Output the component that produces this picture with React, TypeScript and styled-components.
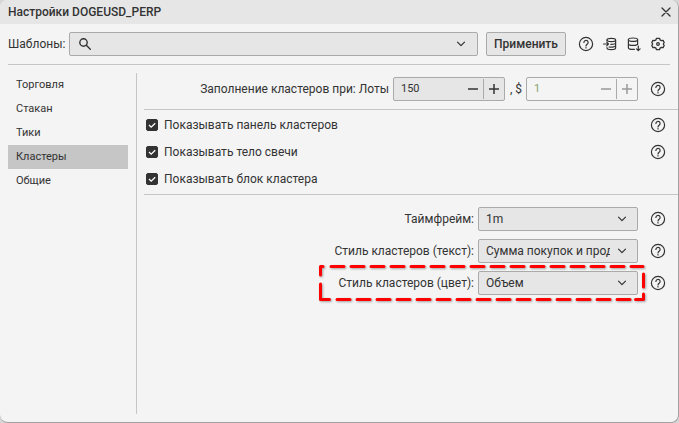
import React, { useState } from 'react';
import styled, { createGlobalStyle, css } from 'styled-components';

const GlobalStyle = createGlobalStyle`
  *, *::before, *::after { box-sizing: border-box; }
  body {
    margin: 0;
    background: #d6d6d6;
    color: #333;
    font: 12px/20px Roboto, "Noto Sans", sans-serif;
  }
  button, input, select { font: inherit; color: inherit; margin: 0; }
`;

const Dialog = styled.main`
  position: relative;
  display: flex;
  flex-direction: column;
  min-height: 100vh;
  background: #f4f4f4;
  border: solid #a2a2a2;
  border-width: 0 1px 1px 0;
  border-radius: 8px;
  overflow: hidden;
`;

const TitleBar = styled.header`
  display: flex;
  align-items: center;
  justify-content: space-between;
  height: 24px;
  padding: 0 4px 0 8px;
  background: #e6e6e6;
`;

const Title = styled.h1`
  margin: 0;
  font-size: 12px;
  font-weight: 500;
  line-height: 24px;
`;

const IconButton = styled.button`
  display: flex;
  align-items: center;
  justify-content: center;
  flex: none;
  width: 16px;
  height: 16px;
  padding: 0;
  border: 0;
  background: none;
  color: #333;
`;

const Toolbar = styled.div`
  display: flex;
  align-items: center;
  height: 41px;
  margin: 0 8px;
  border-bottom: 1px solid #c6c6c6;
`;

const frame = css`
  height: 24px;
  border: 1px solid #aaa;
  border-radius: 2px;
  background: #e6e6e6;
`;

const ToolbarLabel = styled.label`
  width: 61px;
  flex: none;
  white-space: nowrap;
`;

const SearchBox = styled.div`
  ${frame}
  display: flex;
  align-items: center;
  flex: 1;
  min-width: 0;
  padding: 0 8px;
  gap: 6px;
`;

const SearchInput = styled.input`
  flex: 1;
  min-width: 0;
  border: 0;
  padding: 0;
  background: none;
  outline: 0;
`;

const ApplyButton = styled.button`
  ${frame}
  width: 80px;
  margin: 0 12px 0 8px;
  padding: 0;
  font-weight: 500;
`;

const ToolIcons = styled.div`
  display: flex;
  gap: 8px;
  padding-right: 4px;
`;

const Body = styled.div`
  display: flex;
  flex: 1;
  padding: 8px 0 8px 8px;
`;

const Sidebar = styled.nav`
  width: 129px;
  flex: none;
  padding-right: 8px;
  border-right: 1px solid #c6c6c6;
`;

const NavItem = styled.a<{ $active: boolean }>`
  display: block;
  height: 24px;
  padding-left: 8px;
  font-size: 11px;
  line-height: 24px;
  color: inherit;
  text-decoration: none;
  background: ${(p) => (p.$active ? '#c6c6c6' : 'transparent')};
`;

const Content = styled.div`
  flex: 1;
  min-width: 0;
  margin-left: 7px;
`;

const Section = styled.section`
  display: flex;
  flex-direction: column;
`;

const FillSection = styled(Section)`
  padding: 4px 0 8px;
`;

const CheckSection = styled(Section)`
  padding: 1px 0 2px;
  border: solid #c6c6c6;
  border-width: 1px 0;
`;

const SelectSection = styled(Section)`
  padding-top: 12px;
  gap: 8px;
`;

const Row = styled.div`
  display: flex;
  align-items: center;
  justify-content: flex-end;
  min-height: 24px;
  padding-right: 12px;
  white-space: nowrap;
`;

const HelpSlot = styled.span`
  display: flex;
  margin-left: 12px;
`;

const FieldLabel = styled.label`
  margin-right: 4px;
`;

const Separator = styled.label`
  width: 21px;
  padding-left: 5px;
`;

const NumberBox = styled.div<{ $disabled?: boolean }>`
  ${frame}
  display: flex;
  align-items: center;
  width: 112px;
  padding-left: 7px;
  color: #333;
  ${(p) => p.$disabled && css`
    background: #f4f4f4;
    color: #999;
  `}
`;

const NumberInput = styled.input`
  flex: 1;
  min-width: 0;
  padding: 0;
  border: 0;
  outline: 0;
  background: none;
  font-size: 11px;
  &:disabled { color: #89a06e; }
`;

const StepButton = styled.button<{ $divided?: boolean }>`
  display: flex;
  align-items: center;
  justify-content: center;
  flex: none;
  width: 21px;
  height: 20px;
  padding: 0;
  border: 0;
  border-left: ${(p) => (p.$divided ? '1px solid #aaa' : '0')};
  background: none;
`;

const CheckRow = styled(Row)`
  justify-content: space-between;
  height: 27px;
  padding-left: 2px;
`;

const CheckLabel = styled.label`
  display: flex;
  align-items: center;
  gap: 6px;
`;

const CheckMark = styled.span`
  display: grid;
  width: 12px;
  height: 12px;
  & > * { grid-area: 1 / 1; }
  svg { pointer-events: none; }
`;

const CheckInput = styled.input`
  appearance: none;
  width: 12px;
  height: 12px;
  border: 1px solid #333;
  border-radius: 2px;
  &:checked { background: #333; }
  &:not(:checked) + svg { display: none; }
`;

const SelectWrap = styled.div`
  display: grid;
  align-items: center;
  width: 160px;
  & > * { grid-area: 1 / 1; }
  svg { justify-self: end; margin-right: 11px; pointer-events: none; }
`;

const Select = styled.select`
  ${frame}
  appearance: none;
  width: 100%;
  padding: 0 27px 0 7px;
  outline: 0;
`;

const FieldGroup = styled.div`
  position: relative;
  display: flex;
  align-items: center;
`;

const Outline = styled.svg`
  position: absolute;
  right: -8px;
  top: -7px;
  pointer-events: none;
  filter: drop-shadow(1px 1px 1px #0005);
`;

const EdgeStrip = styled.span`
  position: absolute;
  right: -1px;
  top: 266px;
  width: 1px;
  height: 24px;
  background: #43a047;
`;

const stroke = {
  fill: 'none',
  stroke: 'currentColor',
  strokeLinecap: 'round' as const,
  strokeLinejoin: 'round' as const,
};

const HelpIcon = () => (
  <svg width="16" height="16" viewBox="0 0 16 16" {...stroke} strokeWidth="1.2" aria-hidden>
    <circle cx="8" cy="8" r="6.6" />
    <path d="M5.9 6.4a2.1 2.1 0 1 1 3.4 1.7C8.5 8.7 8 9 8 9.9" />
    <path d="M8 11.7v.2" strokeWidth="1.3" />
  </svg>
);

const ImportIcon = () => (
  <svg width="16" height="16" viewBox="0 0 16 16" {...stroke} strokeWidth="1.2" aria-hidden>
    <path d="M5 4.500V4c0-1 1.800-1.600 4.300-1.600S13.600 3 13.600 4v8c0 1-1.800 1.600-4.300 1.600S5 13 5 12v-.500" />
    <path d="M5 4c0 1 1.800 1.600 4.300 1.600S13.600 5 13.600 4M8.800 8.300c2.800.1 4.800-.4 4.800-1.400M7 11c3.600.5 6.600-.2 6.600-1.400" />
    <path d="M1.500 8h5M4.700 6.200 6.500 8 4.700 9.800" />
  </svg>
);

const ExportIcon = () => (
  <svg width="16" height="16" viewBox="0 0 16 16" {...stroke} strokeWidth="1.2" aria-hidden>
    <ellipse cx="7" cy="3.700" rx="4.600" ry="1.700" />
    <path d="M2.400 3.700v8c0 1 2 1.700 4.600 1.700h1.400M11.600 3.700v5M2.400 7.700c0 1 2 1.700 4.600 1.700s4.600-.7 4.600-1.700" />
    <path d="M12.300 10v4.500M10.500 12.900l1.800 1.800 1.800-1.800" />
  </svg>
);

const GearIcon = () => (
  <svg width="16" height="16" viewBox="0 0 16 16" {...stroke} strokeWidth="1.300" aria-hidden>
    <path d="M6.500 2.300h3l.6 1.600 1.300.7 1.700-.2 1.100 2.100L13.300 8l.9 1.500-1.100 2.100-1.700-.2-1.300.7-.6 1.600h-3l-.6-1.600-1.300-.7-1.700.2-1.100-2.100.9-1.500-.9-1.500 1.100-2.100 1.700.2 1.300-.7z" />
    <circle cx="8" cy="8" r="1.300" />
  </svg>
);

const ChevronIcon = () => (
  <svg width="10" height="10" viewBox="0 0 10 10" {...stroke} strokeWidth="1.200" aria-hidden>
    <path d="M1.500 3.200 5 6.700l3.500-3.500" />
  </svg>
);

const SearchIcon = () => (
  <svg width="14" height="14" viewBox="0 0 14 14" {...stroke} strokeWidth="1.400" aria-hidden>
    <circle cx="5.500" cy="5.500" r="3.700" />
    <path d="m8.300 8.300 4 4" />
  </svg>
);

const CloseIcon = () => (
  <svg width="10" height="10" viewBox="0 0 10 10" {...stroke} strokeWidth="1.300" aria-hidden>
    <path d="m1 1 8 8M9 1 1 9" />
  </svg>
);

const StepIcon = ({ plus }: { plus?: boolean }) => (
  <svg width="10" height="10" viewBox="0 0 10 10" fill="none" stroke="currentColor" strokeWidth="1.500" aria-hidden>
    <path d={plus ? 'M0 5h10M5 0v10' : 'M0 5h10'} />
  </svg>
);

const Help = () => (
  <HelpSlot>
    <IconButton aria-label="Справка"><HelpIcon /></IconButton>
  </HelpSlot>
);

interface StepperProps {
  id: string;
  value: string;
  disabled?: boolean;
}

const Stepper = ({ id, value, disabled }: StepperProps) => {
  const [current, setCurrent] = useState(value);
  const step = (by: number) => setCurrent(String(Number(current) + by));
  return (
    <NumberBox $disabled={disabled}>
      <NumberInput id={id} value={current} disabled={disabled} onChange={(e) => setCurrent(e.target.value)} />
      <StepButton disabled={disabled} aria-label="Уменьшить" onClick={() => step(-1)}><StepIcon /></StepButton>
      <StepButton $divided disabled={disabled} aria-label="Увеличить" onClick={() => step(1)}><StepIcon plus /></StepButton>
    </NumberBox>
  );
};

const Check = ({ label, help }: { label: string; help?: boolean }) => (
  <CheckRow>
    <CheckLabel>
      <CheckMark>
        <CheckInput type="checkbox" defaultChecked />
        <svg width="12" height="12" viewBox="0 0 12 12" fill="none" stroke="#fff" strokeWidth="1.300" aria-hidden>
          <path d="m3 6 2.200 2.200L9.200 4.200" />
        </svg>
      </CheckMark>
      {label}
    </CheckLabel>
    {help && <Help />}
  </CheckRow>
);

const Highlight = () => (
  <Outline width="330" height="40" viewBox="0 0 330 40" fill="none" stroke="#f00" strokeWidth="3" strokeLinecap="round" strokeLinejoin="round" aria-hidden>
    <path d="M7 2.500H4.500V11M4.500 20v15.500h9" />
    <path d="M15 2.500H312" strokeDasharray="13 7" />
    <path d="M21 35.500H314" strokeDasharray="13 7" />
    <path d="M315 2.500h12M327.500 10v13M327.500 30v5.500h-8" />
  </Outline>
);

interface SelectFieldProps {
  id: string;
  label: string;
  value: string;
  highlighted?: boolean;
}

const SelectField = ({ id, label, value, highlighted }: SelectFieldProps) => (
  <Row>
    <FieldGroup>
      <FieldLabel htmlFor={id}>{label}</FieldLabel>
      <SelectWrap>
        <Select id={id}><option>{value}</option></Select>
        <ChevronIcon />
      </SelectWrap>
      {highlighted && <Highlight />}
    </FieldGroup>
    <Help />
  </Row>
);

const pages = ['Торговля', 'Стакан', 'Тики', 'Кластеры', 'Общие'];

export default function App() {
  const [page, setPage] = useState('Кластеры');
  return (
    <>
      <GlobalStyle />
      <Dialog>
        <TitleBar>
          <Title>Настройки DOGEUSD_PERP</Title>
          <IconButton aria-label="Закрыть"><CloseIcon /></IconButton>
        </TitleBar>
        <Toolbar>
          <ToolbarLabel htmlFor="template">Шаблоны:</ToolbarLabel>
          <SearchBox>
            <SearchIcon />
            <SearchInput id="template" />
            <IconButton aria-label="Открыть список"><ChevronIcon /></IconButton>
          </SearchBox>
          <ApplyButton>Применить</ApplyButton>
          <ToolIcons>
            <IconButton aria-label="Справка"><HelpIcon /></IconButton>
            <IconButton aria-label="Загрузить шаблон"><ImportIcon /></IconButton>
            <IconButton aria-label="Сохранить шаблон"><ExportIcon /></IconButton>
            <IconButton aria-label="Параметры"><GearIcon /></IconButton>
          </ToolIcons>
        </Toolbar>
        <Body>
          <Sidebar>
            {pages.map((name) => (
              <NavItem key={name} href="#" $active={name === page} onClick={() => setPage(name)}>{name}</NavItem>
            ))}
          </Sidebar>
          <Content>
            <FillSection>
              <Row>
                <FieldLabel htmlFor="lots">Заполнение кластеров при: Лоты</FieldLabel>
                <Stepper id="lots" value="150" />
                <Separator htmlFor="usd">, $</Separator>
                <Stepper id="usd" value="1" disabled />
                <Help />
              </Row>
            </FillSection>
            <CheckSection>
              <Check label="Показывать панель кластеров" help />
              <Check label="Показывать тело свечи" help />
              <Check label="Показывать блок кластера" />
            </CheckSection>
            <SelectSection>
              <SelectField id="timeframe" label="Таймфрейм:" value="1m" />
              <SelectField id="text-style" label="Стиль кластеров (текст):" value="Сумма покупок и продаж" />
              <SelectField id="color-style" label="Стиль кластеров (цвет):" value="Объем" highlighted />
            </SelectSection>
          </Content>
        </Body>
        <EdgeStrip />
      </Dialog>
    </>
  );
}
